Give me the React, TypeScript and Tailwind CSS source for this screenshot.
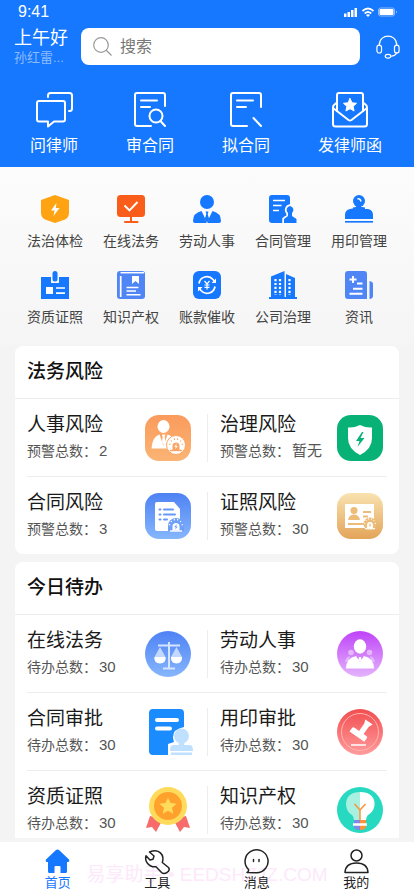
import type { ReactNode } from "react";

const quickActions: { label: string; icon: ReactNode }[] = [
  {
    label: "问律师",
    icon: (
      <g>
        <path d="M14 6V4.500A2.500 2.500 0 0 1 16.500 2H35.500A2.500 2.500 0 0 1 38 4.500V17.500A2.500 2.500 0 0 1 35.500 20H35" />
        <path d="M5 10H29A2 2 0 0 1 31 12V28.500A2 2 0 0 1 29 30.500H20L14 35.500V30.500H5A2 2 0 0 1 3 28.500V12A2 2 0 0 1 5 10Z" />
      </g>
    ),
  },
  {
    label: "审合同",
    icon: (
      <g>
        <path d="M35 15V4A2 2 0 0 0 33 2H7A2 2 0 0 0 5 4V33A2 2 0 0 0 7 35H21" />
        <path d="M11 9.500H27M11 16H20" />
        <circle cx="26" cy="25" r="6.500" />
        <path d="M30.500 30L35 35" />
      </g>
    ),
  },
  {
    label: "拟合同",
    icon: (
      <g>
        <path d="M35 16V4A2 2 0 0 0 33 2H7A2 2 0 0 0 5 4V33A2 2 0 0 0 7 35H21" />
        <path d="M11 9.500H27M11 16H20" />
        <path d="M27.500 27L35 35" />
      </g>
    ),
  },
  {
    label: "发律师函",
    icon: (
      <g>
        <path d="M7 20V4A2 2 0 0 1 9 2H31A2 2 0 0 1 33 4V20" />
        <path d="M7 11.500L4.500 13.500Q3 14.500 3 16.500V33Q3 35.500 5.500 35.500H34.500Q37 35.500 37 33V16.500Q37 14.500 35.500 13.500L33 11.500" />
        <path d="M3 17L18.500 29Q20 30 21.500 29L37 17" />
        <path
          d="M20 7.500L22 11.800L26.500 12.300L23.100 15.400L24.100 20L20 17.700L15.900 20L16.900 15.400L13.500 12.300L18 11.800Z"
          fill="white"
          strokeWidth="1"
        />
      </g>
    ),
  },
];

const services: { label: string; icon: ReactNode }[] = [
  {
    label: "法治体检",
    icon: (
      <g>
        <path d="M14 0L28 5V18Q28 22 24 24.500L14 28L4 24.500Q0 22 0 18V5Z" fill="#ffa312" />
        <path d="M15.500 8L10 15.500H13.500L12.500 21L18.500 13H14.800Z" fill="white" />
      </g>
    ),
  },
  {
    label: "在线法务",
    icon: (
      <g>
        <rect width="28" height="22" rx="3.500" fill="#fa5d19" />
        <path d="M7.500 10.500L12.500 15.500L20.500 7" fill="none" stroke="white" strokeWidth="1.900" />
        <path d="M14 22V27M8 27H20.500" fill="none" stroke="#fa5d19" strokeWidth="2" strokeLinecap="round" />
      </g>
    ),
  },
  {
    label: "劳动人事",
    icon: (
      <g fill="#1677ff">
        <circle cx="14" cy="7" r="7" />
        <path d="M8.500 16L14 27L19.500 16Q28 18 28 26Q28 28 26 28H2Q0 28 0 26Q0 18 8.500 16Z" />
        <path d="M10 16H18L14.500 28H13.500Z" fill="white" />
        <path d="M12.500 16.500H15.500L14.700 19L16.200 24L14 28L11.800 24L13.300 19Z" />
      </g>
    ),
  },
  {
    label: "合同管理",
    icon: (
      <g>
        <path d="M3 0H18Q21 0 21 3V28H3Q0 28 0 25V3Q0 0 3 0Z" fill="#1677ff" />
        <path d="M4 5.500H16M4 10.500H12.500M4 15.500H10" stroke="white" strokeWidth="1.700" />
        <path
          d="M21 11A4 4 0 0 1 23 18V21L27.500 24V28H15V24L19 21V18A4 4 0 0 1 21 11Z"
          fill="#1677ff"
          stroke="#fbfbfb"
          strokeWidth="3.500"
          paintOrder="stroke"
        />
      </g>
    ),
  },
  {
    label: "用印管理",
    icon: (
      <g>
        <circle cx="14" cy="6" r="6" fill="#1677ff" />
        <path d="M12 10H16V14H23Q28 15 28 20V24H0V20Q0 15 5 14L10 13Z" fill="#1677ff" />
        <path d="M8 12.500Q14 11 20 12.500V15H8Z" fill="#1677ff" />
        <path d="M12.500 4Q15 3 16 6.500" fill="none" stroke="white" strokeWidth="1.500" />
        <path d="M0 26.800H28" stroke="#1677ff" strokeWidth="1.700" />
      </g>
    ),
  },
  {
    label: "资质证照",
    icon: (
      <g>
        <path d="M0 6H10V12H18V6H28V28H0Z" fill="#1677ff" />
        <rect x="11.500" width="5" height="10.500" rx="2.500" fill="#1677ff" />
        <rect x="5" y="16" width="7" height="7" fill="white" />
        <path d="M15 17H24M15 22.200H24" stroke="white" strokeWidth="1.700" />
      </g>
    ),
  },
  {
    label: "知识产权",
    icon: (
      <g>
        <rect width="28" height="28" rx="3" fill="#5085f5" />
        <path d="M3.500 1.700H27" stroke="white" strokeWidth="1.500" />
        <path d="M3.700 5V26" stroke="white" strokeWidth="1.700" />
        <path d="M15 5H22V13L18.500 10L15 13Z" fill="white" />
        <path d="M9.500 16.500H21.500M9.500 20H19M9.500 23.700H23.500" stroke="white" strokeWidth="1.500" />
      </g>
    ),
  },
  {
    label: "账款催收",
    icon: (
      <g>
        <rect width="28" height="28" rx="6" fill="#1677ff" />
        <path
          d="M6 12.500A8 8 0 0 1 20 8.500L22 11M22 15.500A8 8 0 0 1 8 19.500L6 17"
          fill="none"
          stroke="white"
          strokeWidth="1.700"
        />
        <path d="M23 7.500V12H18.500ZM5 20.500V16H9.500Z" fill="white" />
        <path d="M11.500 10L14 13L16.500 10M14 13V18.500M11.500 14H16.500M11.500 16.300H16.500" fill="none" stroke="white" strokeWidth="1.200" />
      </g>
    ),
  },
  {
    label: "公司治理",
    icon: (
      <g>
        <path d="M2 5.500L15.500 0V26H2ZM17 3L26 7V26H17Z" fill="#1677ff" />
        <path d="M0 27H28" stroke="#1677ff" strokeWidth="2" />
        <path
          d="M6.500 8V24M11 8V24M20.500 8V24"
          stroke="white"
          strokeWidth="2.200"
          strokeDasharray="2.200 1.700"
        />
      </g>
    ),
  },
  {
    label: "资讯",
    icon: (
      <g>
        <path d="M3 0H19Q22 0 22 3V28H3Q0 28 0 25V3Q0 0 3 0ZM24.500 10Q28 10.500 28 13V25Q28 27.500 24.500 28Z" fill="#5085f5" />
        <path d="M8 5V12M4.500 8.500H11.500M12 12.500H17.500M8 17.700H17.500M4.500 22.800H17.500" stroke="white" strokeWidth="1.900" />
      </g>
    ),
  },
];

function Gradient({ id, from, to }: { id: string; from: string; to: string }) {
  return (
    <defs>
      <linearGradient id={id} x1="0" y1="0" x2="0" y2="1">
        <stop stopColor={from} />
        <stop offset="1" stopColor={to} />
      </linearGradient>
    </defs>
  );
}

function Siren({ color, bolt }: { color: string; bolt: string }) {
  return (
    <g>
      <path d="M-3.500 5V1A3.500 3.500 0 0 1 3.500 1V5Z" fill={color} />
      <path d="M-6 5.500H6" stroke={color} strokeWidth="1.400" />
      <path
        d="M-7 -1L-5.700 -0.500M-5 -4.500L-4.200 -3.500M-1.800 -6.500L-1.500 -5.200M1.800 -6.500L1.500 -5.200M5 -4.500L4.200 -3.500M7 -1L5.700 -0.500"
        stroke={color}
        strokeWidth="1.200"
      />
      <path d="M0.700 -1.500L-1.700 1.800H-0.200L-0.700 4.200L1.700 1H0.200Z" fill={bolt} />
    </g>
  );
}

type Entry = { title: string; count: string; icon: ReactNode };

const risks: Entry[] = [
  {
    title: "人事风险",
    count: "2",
    icon: (
      <g>
        <Gradient id="orange" from="#fa9b5c" to="#fbb474" />
        <rect width="46" height="46" rx="14" fill="url(#orange)" />
        <ellipse cx="18.500" cy="11.500" rx="6" ry="6.500" fill="white" />
        <path d="M6.500 33.500Q7 22 14.500 19.500L18.500 31L22.500 19.500Q28 21 30 26L26 33.500Z" fill="white" />
        <path d="M17 19.500H20.500L19.700 22L20.500 27L18.700 30L17 27L17.700 22Z" fill="white" />
        <circle cx="31" cy="30" r="9.500" fill="white" stroke="#faa667" />
        <g transform="translate(31 30)">
          <Siren color="#f9a566" bolt="white" />
        </g>
      </g>
    ),
  },
  {
    title: "治理风险",
    count: "暂无",
    icon: (
      <g>
        <rect width="46" height="46" rx="14" fill="#08b276" />
        <path d="M23 10Q29 13 35 12.500V23Q35 34 23 40Q11 34 11 23V12.500Q17 13 23 10Z" fill="white" />
        <path d="M25 17L19 26H22.500L20.500 32L27.500 23H23.500L26.500 17Z" fill="#08b276" />
      </g>
    ),
  },
  {
    title: "合同风险",
    count: "3",
    icon: (
      <g>
        <Gradient id="blueTile" from="#4e82f4" to="#86b6fc" />
        <rect width="46" height="46" rx="14" fill="url(#blueTile)" />
        <path d="M12 9H29L35 16V38H12Q10 38 10 36V11Q10 9 12 9Z" fill="white" />
        <path d="M14.500 16.500H15.500M19 16.500H28M14.500 21.500H15.500M19 21.500H30M14.500 26.500H15.500M19 26.500H22" stroke="#6597f8" strokeWidth="2" strokeLinecap="round" />
        <path d="M23 38V33A8 8 0 0 1 39 33V38Z" fill="#6fa0f9" />
        <g transform="translate(31 32.500)">
          <Siren color="white" bolt="#6fa0f9" />
        </g>
      </g>
    ),
  },
  {
    title: "证照风险",
    count: "30",
    icon: (
      <g>
        <Gradient id="goldTile" from="#f9e2b0" to="#e3a45a" />
        <rect width="46" height="46" rx="14" fill="url(#goldTile)" />
        <path d="M8 11H37V30H28V35H8Z" fill="white" />
        <g fill="#ecbc78">
          <circle cx="17" cy="17.500" r="3.500" />
          <path d="M11 27Q12 21.500 17 21.500T23 27Z" />
          <path d="M26 18H34V20H26ZM26 22.500H31V24.500H26ZM11 30H27V32H11Z" />
          <circle cx="33" cy="31" r="6.500" />
        </g>
        <g transform="translate(33 31) scale(.85)">
          <Siren color="white" bolt="#ecbc78" />
        </g>
      </g>
    ),
  },
];

const todos: Entry[] = [
  {
    title: "在线法务",
    count: "30",
    icon: (
      <g>
        <Gradient id="blueDisc" from="#4e82f4" to="#86b6fc" />
        <circle cx="23" cy="23" r="23" fill="url(#blueDisc)" />
        <path d="M24 11V37M13 14.500H35M18 37.500H30" stroke="#d5e4ff" strokeWidth="2" />
        <path d="M15 16L20.500 26Q21 32 15 32T9.500 26ZM31.500 16L37 26Q37 32 31.500 32T26 26Z" fill="#c4d8fe" />
        <path d="M9.500 26H20.500Q21 32.500 15 32.500T9.500 26ZM26 26H37Q37 32.500 31.500 32.500T26 26Z" fill="white" />
      </g>
    ),
  },
  {
    title: "劳动人事",
    count: "30",
    icon: (
      <g>
        <Gradient id="purpleDisc" from="#bf43f8" to="#e4b5fc" />
        <circle cx="23" cy="23" r="23" fill="url(#purpleDisc)" />
        <g fill="#e5b8fd">
          <circle cx="14" cy="21.500" r="2.800" />
          <circle cx="32.500" cy="21.500" r="2.800" />
          <path d="M8 31Q9 26 13 25L11 31ZM38 31Q37 26 33 25L35 31Z" />
        </g>
        <ellipse cx="23" cy="15.500" rx="6.200" ry="7.200" fill="white" />
        <path d="M9 37.500Q9 27 19 25L23 31L27 25Q37 27 37 37.500Z" fill="white" />
        <path d="M22 26H24L24.500 28.500L23 31L21.500 28.500Z" fill="white" />
      </g>
    ),
  },
  {
    title: "合同审批",
    count: "30",
    icon: (
      <g>
        <path d="M8 0H35Q39 0 39 4V18Q28 20 28 28Q28 30 29 33L23 35Q23 38 23 46H8Q4 46 4 42V4Q4 0 8 0Z" fill="#1b8cff" />
        <path d="M12 11H32M12 19.500H25" stroke="white" strokeWidth="4" strokeLinecap="round" />
        <g fill="#c0e0ff">
          <circle cx="36.500" cy="27" r="7.500" />
          <path d="M33 31H40L39 36H45Q48 36 48 42H25Q25 36 28 36H34ZM26 43.500H47V46H26Z" />
        </g>
      </g>
    ),
  },
  {
    title: "用印审批",
    count: "30",
    icon: (
      <g>
        <Gradient id="redDisc" from="#f24e50" to="#ff9b9b" />
        <circle cx="23" cy="23" r="23" fill="url(#redDisc)" />
        <circle cx="23" cy="23" r="18.500" fill="none" stroke="#ffb4b4" strokeWidth="1" />
        <g fill="white" transform="rotate(35 23 25)">
          <path d="M19 10H28L26 14V23H30Q31 23 31 25V29H13V25Q13 23 15 23H20.500V14Z" />
        </g>
        <path d="M14 36H29" stroke="white" strokeWidth="1.500" />
      </g>
    ),
  },
  {
    title: "资质证照",
    count: "30",
    icon: (
      <g>
        <path d="M5 29L1 41L7 40L11 45L18 32ZM41 29L45 41L39 40L35 45L28 32Z" fill="#f76b6b" />
        <circle cx="23" cy="19" r="19" fill="#ffdb5c" />
        <circle cx="23" cy="19" r="14" fill="#ffa22d" />
        <path d="M23 10.500L25.500 16L31.500 16.700L27 20.700L28.200 26.700L23 23.700L17.800 26.700L19 20.700L14.500 16.700L20.500 16Z" fill="#ffdb5c" />
      </g>
    ),
  },
  {
    title: "知识产权",
    count: "30",
    icon: (
      <g>
        <circle cx="23" cy="23" r="23" fill="#26d9c0" />
        <path d="M23 5C5 5 7 24 15 28Q17 30 17 33H23Z" fill="#a8f0e0" />
        <path d="M23 5C42 5 40 24 31 28Q29 30 29 33H23Z" fill="white" />
        <path d="M23 33V23L17.500 17M23 23L28.500 17" fill="none" stroke="#ff9238" strokeWidth="1.500" />
        <path d="M17 33H23V43Q17 43 17 39Z" fill="#8186e8" />
        <path d="M23 33H29V39Q29 43 23 43Z" fill="#ff9238" />
        <path d="M16 37.500H30" stroke="white" strokeWidth="2.500" />
      </g>
    ),
  },
];

const tabs: { label: string; icon: ReactNode }[] = [
  {
    label: "首页",
    icon: (
      <path
        d="M11 1Q12.500 0 14 1L24 10.500Q25 12 23.500 13H22V22.500Q22 24 20.500 24H15.500V18Q15.500 17 14.500 17H10.500Q9.500 17 9.500 18V24H4.500Q3 24 3 22.500V13H1.500Q0 12 1 10.500Z"
        fill="#1677ff"
      />
    ),
  },
  {
    label: "工具",
    icon: (
      <path
        d="M4.500 3L9 7L8 10.300L5 11L1 6.700C-0.500 12 3.500 18.500 11 17.800L16.500 23.500Q18.800 25.500 22 23.500Q25.500 21 23.500 18.500L17.300 13.500C19.500 6.500 15 -1 4.500 3Z"
        fill="none"
        stroke="#222"
        strokeWidth="1.500"
        strokeLinejoin="round"
      />
    ),
  },
  {
    label: "消息",
    icon: (
      <g fill="none" stroke="#222" strokeWidth="1.500" strokeLinecap="round">
        <path d="M3 23.500Q5 22.500 4.500 20.500A11.500 11.500 0 1 1 12.500 23.800Z" strokeLinejoin="round" />
        <path d="M9.500 10.500V12.500M15 10.500V12.500" />
      </g>
    ),
  },
  {
    label: "我的",
    icon: (
      <g fill="none" stroke="#222" strokeWidth="1.500" strokeLinejoin="round">
        <circle cx="12.500" cy="6.500" r="5.500" />
        <path d="M1 23.500Q1.500 14 12.500 14T24 23.500Z" />
      </g>
    ),
  },
];

function EntryCard({ title, caption, entries }: { title: string; caption: string; entries: Entry[] }) {
  return (
    <section className="rounded-lg bg-white">
      <h2 className="flex h-[53px] items-center border-b border-[#ededed] px-3 text-[19px] font-medium text-[#111]">
        {title}
      </h2>
      <ul className="grid grid-cols-2 px-3">
        {entries.map((entry, i) => (
          <li
            key={entry.title}
            className={`flex items-center ${i < entries.length - 2 ? "h-[78px] border-b border-[#ededed]" : "h-[77px]"}`}
          >
            <button
              className={`flex h-12 w-full items-center justify-between text-left ${
                i % 2 ? "border-l border-[#ededed] pr-1 pl-3" : "pr-4"
              }`}
            >
              <span>
                <span className="block text-[19px] leading-6 text-[#1a1a1a]">{entry.title}</span>
                <span className="mt-0.5 block text-sm leading-6 text-[#555]">
                  {caption}：<span className="ml-0.5 text-[15px]">{entry.count}</span>
                </span>
              </span>
              <svg viewBox="0 0 46 46" className="size-[46px] shrink-0 overflow-visible" aria-hidden="true">
                {entry.icon}
              </svg>
            </button>
          </li>
        ))}
      </ul>
    </section>
  );
}

export default function App() {
  return (
    <div className="flex h-screen flex-col bg-[#f4f4f4] font-['Liberation_Sans','Noto_Sans_CJK_SC',sans-serif]">
      <header className="shrink-0 bg-[#1677ff] text-white">
        <div className="flex h-6 items-center justify-between pr-4 pl-[18px]">
          <span className="text-base leading-6">9:41</span>
          <svg viewBox="0 0 54 12" className="h-3 w-[54px]" fill="white" aria-hidden="true">
            <path d="M0 7.500H2.500V11H0ZM3.500 6H6V11H3.500ZM7 4H9.500V11H7ZM10.500 2H13V11H10.500Z" />
            <g fill="none" stroke="white" strokeWidth="1.700">
              <path d="M18.500 5Q24 0 29.500 5M20.700 7.500Q24 4.500 27.300 7.500" />
            </g>
            <path d="M22 9Q24 7.500 26 9L24 11Z" />
            <rect x="34.500" y="2" width="16" height="8" rx="2" fill="none" stroke="#8dbdff" />
            <rect x="35.500" y="3" width="14" height="6" rx="1" />
            <path d="M52 4.500Q54 6 52 7.500Z" fill="#8dbdff" />
          </svg>
        </div>
        <div className="flex h-[45px] items-center px-[14px]">
          <div className="w-[67px] shrink-0 pb-0.5">
            <p className="text-lg leading-6">上午好</p>
            <p className="text-[13px] leading-4 text-[#8ebcff]">孙红雷...</p>
          </div>
          <label className="flex h-[37px] min-w-0 grow items-center gap-2 rounded-lg bg-white px-3">
            <svg viewBox="0 0 19 19" className="size-[19px] shrink-0" fill="none" stroke="#999" strokeWidth="1.200" aria-hidden="true">
              <circle cx="8" cy="8" r="7.300" />
              <path d="M13 13L18.500 18.500" />
            </svg>
            <input
              type="search"
              aria-label="搜索"
              placeholder="搜索"
              className="w-full min-w-0 bg-transparent text-base text-[#333] outline-none placeholder:text-[#777]"
            />
          </label>
          <button aria-label="客服" className="ml-4 shrink-0">
            <svg viewBox="0 0 26 26" className="size-6" fill="none" stroke="white" strokeWidth="1.300" aria-hidden="true">
              <path d="M3.500 11C3.500 -2 22.500 -2 22.500 11M22.500 19Q21 23 16 23" />
              <rect x="1" y="11" width="5" height="8.500" rx="2.500" />
              <rect x="20" y="11" width="5" height="8.500" rx="2.500" />
              <ellipse cx="13" cy="23" rx="3" ry="2" />
            </svg>
          </button>
        </div>
        <nav className="flex justify-between pt-[22px] pr-8 pb-2 pl-[30px]">
          {quickActions.map((action) => (
            <button key={action.label} className="flex flex-col items-center">
              <svg
                viewBox="0 0 40 38"
                className="h-[38px] w-10"
                fill="none"
                stroke="white"
                strokeWidth="2"
                strokeLinecap="round"
                strokeLinejoin="round"
                aria-hidden="true"
              >
                {action.icon}
              </svg>
              <span className="mt-1 text-base leading-[26px]">{action.label}</span>
            </button>
          ))}
        </nav>
      </header>

      <main className="min-h-0 grow overflow-y-auto [scrollbar-width:none]">
        <nav className="grid grid-cols-5 gap-y-5 bg-linear-to-b from-[#fcfcfc] to-[#f5f5f5] px-[17px] pt-7 pb-[19px]">
          {services.map((service) => (
            <button key={service.label} className="flex flex-col items-center">
              <svg viewBox="0 0 28 28" className="size-7" aria-hidden="true">
                {service.icon}
              </svg>
              <span className="mt-2 text-sm leading-5 whitespace-nowrap text-[#444]">{service.label}</span>
            </button>
          ))}
        </nav>
        <div className="flex flex-col gap-2 px-[15px] pb-2">
          <EntryCard title="法务风险" caption="预警总数" entries={risks} />
          <EntryCard title="今日待办" caption="待办总数" entries={todos} />
        </div>
      </main>

      <footer className="relative shrink-0 border-t-4 border-[#f4f4f4] bg-white">
        <p
          aria-hidden="true"
          className="pointer-events-none absolute inset-x-0 top-[19px] text-center text-[19px] leading-7 whitespace-nowrap text-[#fde9fb]"
        >
          易享助手 • EEDSHZJZ.COM
        </p>
        <nav className="relative grid grid-cols-4 px-2 pt-[7px] pb-1">
          {tabs.map((tab, i) => (
            <button key={tab.label} className="flex flex-col items-center">
              <svg viewBox="0 0 25 25" className="size-[25px] overflow-visible" aria-hidden="true">
                {tab.icon}
              </svg>
              <span className={`text-[13px] leading-[18px] ${i === 0 ? "text-[#1677ff]" : "text-[#222]"}`}>
                {tab.label}
              </span>
            </button>
          ))}
        </nav>
      </footer>
    </div>
  );
}
